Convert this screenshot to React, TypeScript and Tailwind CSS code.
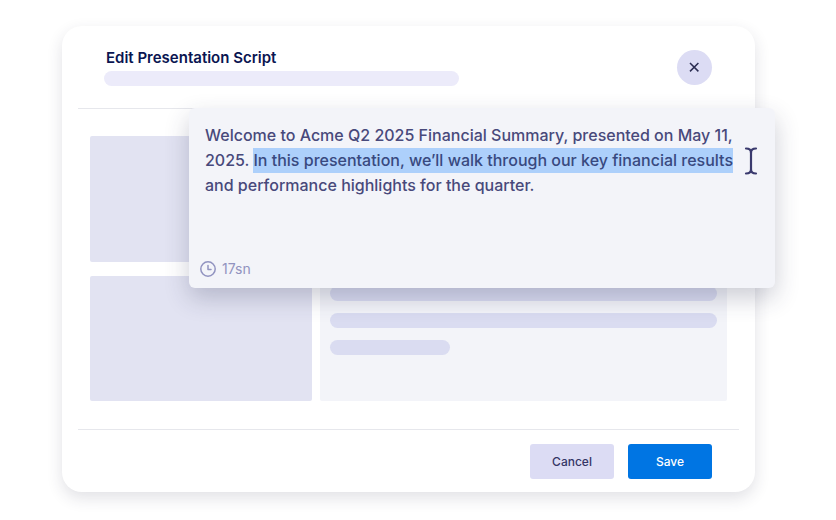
import { useEffect, useRef } from 'react';

const script =
  'Welcome to Acme Q2 2025 Financial Summary, presented on May 11, 2025. In this presentation, we’ll walk through our key financial results and performance highlights for the quarter.';

const selected = 'In this presentation, we’ll walk through our key financial results';

// placeholder lines of the slide preview
const lines = [
  { id: 1, width: 'w-full' },
  { id: 2, width: 'w-full' },
  { id: 3, width: 'w-full' },
  { id: 4, width: 'w-full' },
  { id: 5, width: 'w-full' },
  { id: 6, width: 'w-full' },
  { id: 7, width: 'w-full' },
  { id: 8, width: 'w-[120px]' },
];

function CloseIcon() {
  return (
    <svg width="11" height="11" viewBox="0 0 11 11" fill="none" stroke="currentColor" strokeWidth="1.5" aria-hidden="true">
      <path d="M1 1l8.4 8.4M9.4 1l-8.4 8.4" />
    </svg>
  );
}

function ClockIcon() {
  return (
    <svg width="16" height="16" viewBox="0 0 16 16" fill="none" stroke="currentColor" strokeWidth="1.5" strokeLinecap="round" strokeLinejoin="round" aria-hidden="true">
      <circle cx="8" cy="8" r="7.2" />
      <path d="M8 4.5V8.4H11" />
    </svg>
  );
}

function TextCursor() {
  return (
    <svg width="14" height="28" viewBox="0 0 14 28" fill="none" stroke="currentColor" strokeWidth="2.2" strokeLinecap="round" aria-hidden="true">
      <path d="M2 1.5C5 1.5 7 3 7 5.5C7 3 9 1.5 12 1.5" />
      <path d="M7 5.5V22.5" />
      <path d="M2 26.5C5 26.5 7 25 7 22.5C7 25 9 26.5 12 26.5" />
    </svg>
  );
}

function ScriptEditor() {
  const ref = useRef<HTMLTextAreaElement>(null);

  useEffect(() => {
    const start = script.indexOf(selected);
    ref.current?.focus();
    ref.current?.setSelectionRange(start, start + selected.length);
  }, []);

  return (
    <div className="absolute left-[127px] -right-5 top-[82px] flex h-[180px] flex-col rounded-md bg-[#f3f4f9] shadow-[0_10px_24px_rgba(40,45,80,0.24)]">
      <textarea
        ref={ref}
        aria-label="Presentation script"
        defaultValue={script}
        spellCheck={false}
        className="ml-4 mr-7 mt-[15px] flex-1 resize-none bg-transparent text-base font-medium leading-[25px] text-[#48497b] outline-none selection:bg-[#accffb]/99 selection:text-[#38497f]"
      />
      <div className="flex items-center gap-[6px] px-[11px] pb-[9px] text-sm text-[#9193c0]">
        <ClockIcon />
        <span>17sn</span>
      </div>
      <div className="pointer-events-none absolute right-[17px] top-[39px] text-[#3a3a6e]">
        <TextCursor />
      </div>
    </div>
  );
}

export default function App() {
  return (
    <div className="min-h-screen bg-white pb-7 pl-[62px] pr-[81px] pt-[26px] font-['Inter',sans-serif]">
      <section className="relative rounded-[20px] bg-white shadow-[0_6px_16px_rgba(40,45,70,0.14)]">
        <header className="mx-4 flex items-start justify-between border-b border-[#e6e7ec] pb-[22px] pl-7 pr-[27px] pt-6">
          <div className="flex-1">
            <h1 className="text-[15px] font-semibold leading-4 text-[#0a1551]">Edit Presentation Script</h1>
            <div className="-ml-[2px] mt-[5px] h-[15px] w-[355px] rounded-full bg-[#ecebfa]" />
          </div>
          <button type="button" aria-label="Close" className="flex size-[35px] items-center justify-center rounded-full bg-[#dcdcf4] text-[#2b2d52]">
            <CloseIcon />
          </button>
        </header>

        <div className="flex gap-2 px-7 pb-7 pt-[27px]">
          <div className="flex w-[222px] flex-col gap-[14px]">
            <div className="flex-1 rounded-xs bg-[#e2e3f2]" />
            <div className="flex-1 rounded-xs bg-[#e2e3f2]" />
          </div>
          <div className="flex h-[265px] flex-1 flex-col gap-3 rounded-xs bg-[#f3f4f9] px-[10px] pt-[15px]">
            {lines.map((line) => (
              <div key={line.id} className={`h-[15px] rounded-full bg-[#dadcf1] ${line.width}`} />
            ))}
          </div>
        </div>

        <footer className="mx-4 flex justify-end gap-[14px] border-t border-[#e6e7ec] px-[27px] pb-[13px] pt-[14px] text-xs font-medium">
          <button type="button" className="h-[35px] w-[84px] rounded-[3px] bg-[#dcdcf4] text-[#343566]">
            Cancel
          </button>
          <button type="button" className="h-[35px] w-[84px] rounded-[3px] bg-[#0075e3] text-white">
            Save
          </button>
        </footer>

        <ScriptEditor />
      </section>
    </div>
  );
}
